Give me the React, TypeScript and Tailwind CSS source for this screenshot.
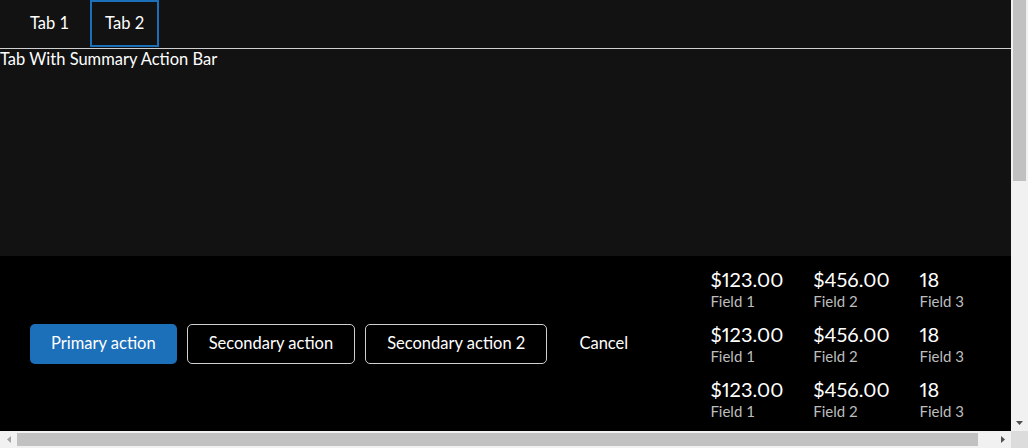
import React from "react";

const rows = [0, 1, 2];

function SummaryItem({ value, label }: { value: string; label: string }) {
  return (
    <div className="flex flex-col">
      <span className="text-[20px] leading-[24px] text-white proportional-nums">{value}</span>
      <span className="text-[15px] leading-[20px] text-[#bdbdbd]">{label}</span>
    </div>
  );
}

function Tri({ dir, color }: { dir: "down" | "left" | "right"; color: string }) {
  const pts =
    dir === "down" ? "0,0 7,0 3.5,4" : dir === "left" ? "4,0 4,7 0,3.5" : "0,0 0,7 4,3.5";
  const w = dir === "down" ? 7 : 4;
  const h = dir === "down" ? 4 : 7;
  return (
    <svg width={w} height={h} viewBox={`0 0 ${w} ${h}`}>
      <polygon points={pts} fill={color} />
    </svg>
  );
}

export default function App() {
  return (
    <div className="w-[1028px] h-[448px] flex flex-col overflow-hidden text-white [font-family:Lato,'Noto_Sans',sans-serif]">
      <div className="flex flex-1 min-h-0">
        <div className="flex-1 min-w-0 flex flex-col bg-[#121212]">
          <div className="flex h-[49px] shrink-0 border-b border-[#d0d0d0] pl-[15px] gap-[6px]">
            <button className="h-[47px] px-[13px] border-2 border-transparent flex items-center text-[16.5px] text-white">
              Tab 1
            </button>
            <button className="h-[47px] px-[13px] border-2 border-[#1c6fb9] flex items-center text-[16.5px] text-white">
              Tab 2
            </button>
          </div>
          <div className="flex-1 text-[16.5px] leading-[20px]">Tab With Summary Action Bar</div>
          <div className="h-[175px] shrink-0 bg-black flex items-center justify-between pl-[30px] pr-[47px]">
            <div className="flex items-center gap-[10px]">
              <button className="h-[40px] px-[21px] rounded-[5px] bg-[#1c6fb9] text-[16.5px] text-white">
                Primary action
              </button>
              <button className="h-[40px] px-[21px] rounded-[5px] border border-[#cfcfcf] bg-black text-[16.5px] text-white">
                Secondary action
              </button>
              <button className="h-[40px] px-[21px] rounded-[5px] border border-[#cfcfcf] bg-black text-[16.5px] text-white">
                Secondary action 2
              </button>
              <button className="h-[40px] px-[22px] rounded-[5px] bg-black text-[16.5px] text-white">
                Cancel
              </button>
            </div>
            <div className="grid grid-cols-[auto_auto_auto] gap-x-[30px] gap-y-[11px]">
              {rows.map((r) => (
                <React.Fragment key={r}>
                  <SummaryItem value="$123.00" label="Field 1" />
                  <SummaryItem value="$456.00" label="Field 2" />
                  <SummaryItem value="18" label="Field 3" />
                </React.Fragment>
              ))}
            </div>
          </div>
        </div>
        <div className="w-[17px] shrink-0 bg-[#f1f1f1] flex flex-col">
          <div className="h-[181px] mx-[2px] bg-[#c1c1c1]" />
          <div className="flex-1" />
          <div className="h-[17px] flex items-center justify-center">
            <Tri dir="down" color="#505050" />
          </div>
        </div>
      </div>
      <div className="h-[17px] shrink-0 flex bg-[#f1f1f1]">
        <div className="w-[17px] flex items-center justify-center">
          <Tri dir="left" color="#a3a3a3" />
        </div>
        <div className="flex-1 flex items-center pr-[16px]">
          <div className="h-[13px] w-full bg-[#c1c1c1]" />
        </div>
        <div className="w-[17px] flex items-center justify-center">
          <Tri dir="right" color="#505050" />
        </div>
        <div className="w-[17px] bg-[#dcdcdc]" />
      </div>
    </div>
  );
}
